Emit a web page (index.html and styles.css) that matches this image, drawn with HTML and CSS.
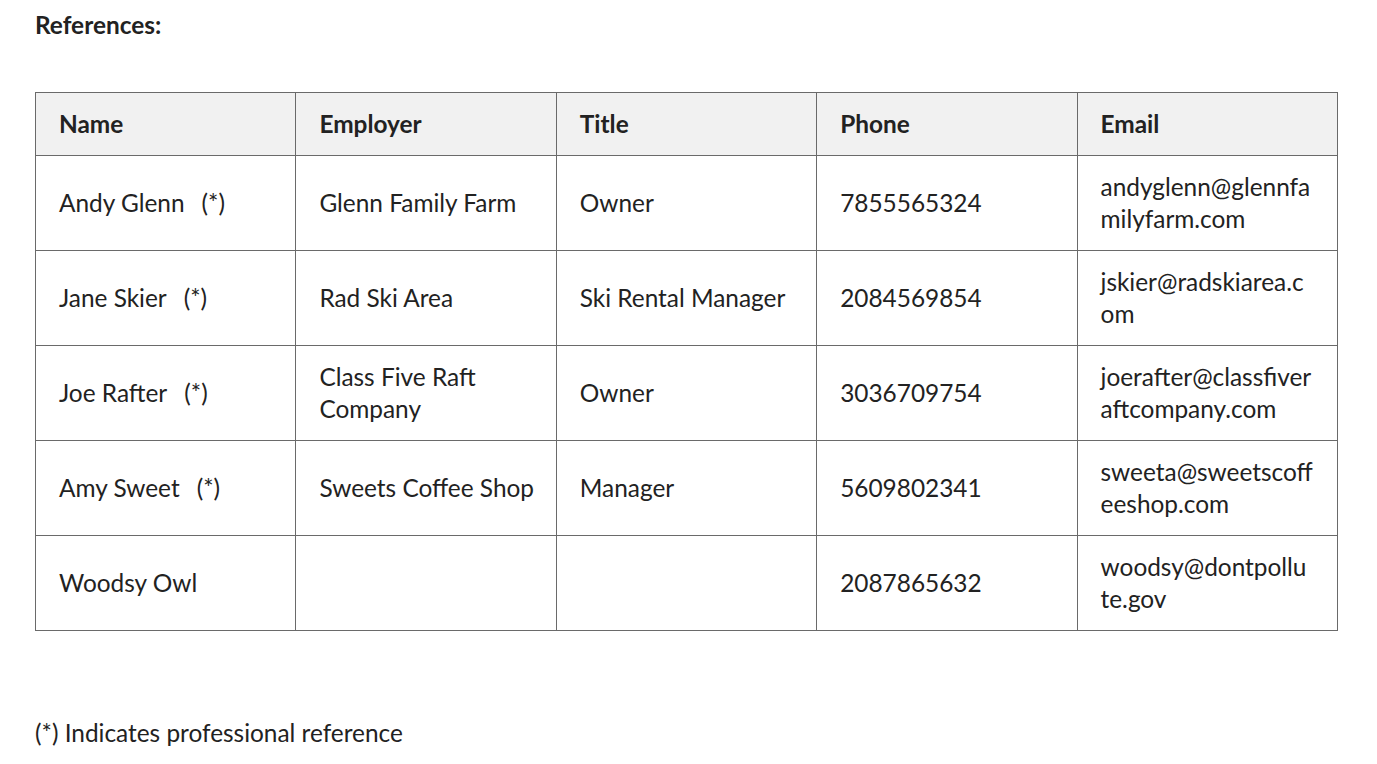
FILE: index.html
```html
<!DOCTYPE html>
<html lang="en">
<head>
<meta charset="utf-8">
<title>References</title>
<link rel="stylesheet" href="styles.css">
</head>
<body>
<main class="page">
  <h2 class="heading">References:</h2>
  <table class="refs">
    <thead>
      <tr>
        <th>Name</th>
        <th>Employer</th>
        <th>Title</th>
        <th>Phone</th>
        <th>Email</th>
      </tr>
    </thead>
    <tbody>
      <tr>
        <td>Andy Glenn<span class="pro">(*)</span></td>
        <td>Glenn Family Farm</td>
        <td>Owner</td>
        <td>7855565324</td>
        <td class="email">andyglenn@glennfamilyfarm.com</td>
      </tr>
      <tr>
        <td>Jane Skier<span class="pro">(*)</span></td>
        <td>Rad Ski Area</td>
        <td>Ski Rental Manager</td>
        <td>2084569854</td>
        <td class="email">jskier@radskiarea.com</td>
      </tr>
      <tr>
        <td>Joe Rafter<span class="pro">(*)</span></td>
        <td>Class Five Raft Company</td>
        <td>Owner</td>
        <td>3036709754</td>
        <td class="email">joerafter@classfiveraftcompany.com</td>
      </tr>
      <tr>
        <td>Amy Sweet<span class="pro">(*)</span></td>
        <td>Sweets Coffee Shop</td>
        <td>Manager</td>
        <td>5609802341</td>
        <td class="email">sweeta@sweetscoffeeshop.com</td>
      </tr>
      <tr>
        <td>Woodsy Owl</td>
        <td></td>
        <td></td>
        <td>2087865632</td>
        <td class="email">woodsy@dontpollute.gov</td>
      </tr>
    </tbody>
  </table>
  <p class="note">(*) Indicates professional reference</p>
</main>
</body>
</html>
```
FILE: styles.css
```css
html, body {
  margin: 0;
  padding: 0;
  background: #ffffff;
}

body {
  font-family: Lato, "Noto Sans", "Liberation Sans", sans-serif;
  font-size: 24.4px;
  line-height: 32px;
  color: #222222;
}

.page {
  padding: 9px 40px 0 35px;
}

.heading {
  margin: 0;
  font-size: 24.4px;
  line-height: 32px;
  font-weight: 700;
}

.refs {
  margin-top: 51px;
  width: 1303px;
  border-collapse: collapse;
  table-layout: fixed;
}

.refs th,
.refs td {
  border: 1px solid #6a6a6a;
  padding: 15px 18px 15px 23px;
  text-align: left;
  vertical-align: middle;
  font-size: 24.4px;
  line-height: 32px;
}

.refs th {
  background: #f1f1f1;
  font-weight: 700;
}

.refs td {
  font-weight: 400;
  height: 64px;
}

.refs td.email {
  padding-right: 23px;
  word-break: break-all;
}

.pro {
  margin-left: 17px;
}

.note {
  margin: 86px 0 0;
  font-size: 24.4px;
  line-height: 32px;
}
```
